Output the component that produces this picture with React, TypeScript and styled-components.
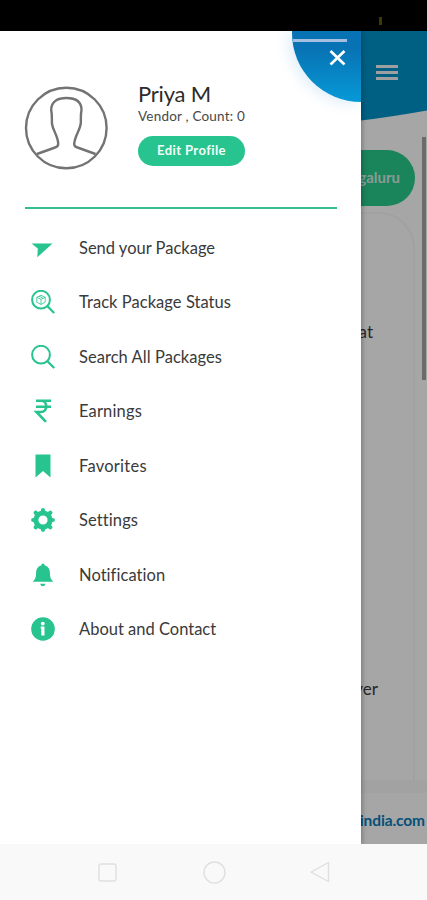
import React from "react";
import styled, { createGlobalStyle } from "styled-components";

const GREEN = "#27c48f";

const GlobalStyle = createGlobalStyle`
  *, *::before, *::after { box-sizing: border-box; }
  body { margin: 0; background: #fff; font-family: Lato, "Open Sans", sans-serif; }
  h1, p, ul { margin: 0; padding: 0; }
  button { font: inherit; border: 0; padding: 0; background: none; cursor: pointer; }
`;

const Phone = styled.div`
  display: flex;
  flex-direction: column;
  width: 427px;
  height: 900px;
  overflow: hidden;
`;

const StatusBar = styled.div`
  display: flex;
  flex: 0 0 31px;
  justify-content: flex-end;
  padding: 17px 45px 0 0;
  background: #000;
`;

const StatusMark = styled.span`
  width: 3px;
  height: 8px;
  background: #3f3905;
`;

const Stage = styled.main`
  position: relative;
  flex: 0 0 812.5px;
  overflow: hidden;
`;

const Page = styled.div`
  display: flex;
  flex-direction: column;
  height: 100%;
  background: #fff;
`;

const PageHeader = styled.header`
  position: relative;
  display: flex;
  flex: 0 0 90px;
  align-items: flex-start;
  justify-content: flex-end;
  padding: 34px 29px 0 0;
`;

const HeaderShape = styled.svg`
  position: absolute;
  inset: 0;
`;

const MenuButton = styled.button`
  position: relative;
  display: flex;
  flex-direction: column;
  gap: 3px;
  width: 22px;
`;

const MenuBar = styled.span`
  height: 3px;
  background: #f4f4f4;
`;

const PageBody = styled.section`
  display: flex;
  flex: 0 0 659px;
  flex-direction: column;
  padding: 29px 12px 0;
`;

const CityButton = styled.button`
  flex: 0 0 56px;
  padding: 0 15px 3px 0;
  border-radius: 28px;
  background: #28cb8b;
  color: #d5eee3;
  font-size: 15px;
  font-weight: 700;
  text-align: right;
`;

const Card = styled.article`
  display: flex;
  flex: 1;
  flex-direction: column;
  align-items: flex-end;
  margin-top: 6px;
  padding: 107px 40px 0 0;
  border: 2px solid #f7f7f7;
  border-bottom: 0;
  border-radius: 36px 36px 0 0;
  color: #3c3c3c;
  font-size: 17px;
  line-height: 22px;
`;

const CardLine = styled.p<{ $gap?: number; $shift?: number }>`
  margin-top: ${(p) => p.$gap ?? 0}px;
  margin-right: ${(p) => p.$shift ?? 0}px;
`;

const PageFooter = styled.footer`
  flex: 1;
  border-top: 13px solid #f9f9f9;
  padding: 17px 2px 0 0;
  color: #0b7cb8;
  font-size: 15.5px;
  font-weight: 700;
  letter-spacing: -0.1px;
  line-height: 20px;
  text-align: right;
`;

const ScrollThumb = styled.div`
  position: absolute;
  top: 106px;
  right: 1px;
  width: 4px;
  height: 243px;
  background: #a5a5a5;
`;

const Scrim = styled.div`
  position: absolute;
  inset: 0;
  background: rgba(0, 0, 0, 0.35);
`;

const Drawer = styled.aside`
  position: absolute;
  inset: 0 auto 0 0;
  display: flex;
  flex-direction: column;
  width: 361px;
  padding: 51px 24px 0;
  background: #fff;
  box-shadow: 1px 0 5px rgba(0, 0, 0, 0.3);
`;

const CloseCorner = styled.button`
  position: absolute;
  top: 0;
  right: 0;
  width: 69px;
  height: 71px;
  border-radius: 0 0 0 69px;
  background: linear-gradient(#0873b4 25%, #0799d7);
  box-shadow: -4px 2px 14px rgba(0, 130, 205, 0.14);
`;

const Profile = styled.section`
  display: flex;
  gap: 30px;
  height: 125px;
`;

const Identity = styled.div`
  display: flex;
  flex-direction: column;
  align-items: flex-start;
`;

const Name = styled.h1`
  color: #2c2c2c;
  font-size: 22px;
  font-weight: 400;
  letter-spacing: -0.2px;
  line-height: 23px;
`;

const Role = styled.p`
  margin-top: 2px;
  color: #484848;
  font-size: 13.5px;
  line-height: 18px;
  letter-spacing: 0.2px;
`;

const EditButton = styled.button`
  width: 107px;
  height: 30px;
  margin-top: 11px;
  padding-bottom: 2px;
  border-radius: 15px;
  background: ${GREEN};
  color: #f3fffa;
  font-size: 13px;
  font-weight: 700;
  letter-spacing: 0.4px;
`;

const Rule = styled.div`
  flex: 0 0 2px;
  margin-left: 1px;
  background: #36bd8e;
`;

const MenuList = styled.ul`
  display: flex;
  flex-direction: column;
  padding-top: 11.5px;
  list-style: none;
`;

const MenuItem = styled.li`
  display: grid;
  grid-template-columns: 24px 1fr;
  column-gap: 24px;
  align-items: center;
  height: 54.5px;
  padding-left: 7px;
  color: #3a3a3a;
`;

const Label = styled.span<{ $tracking: number }>`
  font-size: 16.5px;
  font-variant-ligatures: none;
  letter-spacing: ${(p) => p.$tracking}px;
  white-space: nowrap;
`;

const NavBar = styled.nav`
  display: flex;
  flex: 1;
  align-items: center;
  justify-content: space-between;
  padding: 0 95px;
  background: #f9f9f9;
`;

const Outline = styled.svg`
  fill: none;
  stroke: #e0e0e0;
  stroke-width: 1.4;
  stroke-linejoin: round;
`;

const Lens = ({ children }: { children?: React.ReactNode }) => (
  <g fill="none" stroke={GREEN}>
    <circle cx="10" cy="9.7" r="8.9" strokeWidth="2" />
    <path d="M16.2 16 23.2 23" strokeWidth="2.3" />
    {children}
  </g>
);

const items: { label: string; tracking: number; icon: React.ReactNode }[] = [
  { label: "Send your Package", tracking: 0, icon: <path d="M.5 7.4H21.5L6.3 21.3 6.8 12.6Z" fill={GREEN} /> },
  {
    label: "Track Package Status",
    tracking: 0.05,
    icon: (
      <Lens>
        <path d="M5.8 7.3 10 5.3l4.2 2v5L10 14.4l-4.2-2.1zM5.8 7.3 10 9.4l4.2-2.1M10 9.4v5M8 6.2l4.2 2.1" strokeWidth="0.8" />
      </Lens>
    ),
  },
  { label: "Search All Packages", tracking: 0.05, icon: <Lens /> },
  {
    label: "Earnings",
    tracking: 0.15,
    icon: <path d="M5 1.7H20M5 7.8H20M5 1.7H10C17 1.7 17 13 10 13H5.5L15 22.8" fill="none" stroke={GREEN} strokeWidth="2.6" />,
  },
  { label: "Favorites", tracking: 0.25, icon: <path d="M4.5 .5H19.5V23.5L12 17 4.5 23.5Z" fill={GREEN} /> },
  {
    label: "Settings",
    tracking: 0.1,
    icon: (
      <g fill="none" stroke={GREEN}>
        <circle cx="12" cy="12" r="7.1" strokeWidth="5" />
        <path
          d="M12 2.2V4M12 20v1.8M2.2 12H4M20 12h1.8M4.7 4.7l1.6 1.6M17.7 17.7l1.6 1.6M4.7 19.3l1.6-1.6M17.7 6.3l1.6-1.6"
          strokeWidth="4.2"
          strokeLinecap="round"
        />
      </g>
    ),
  },
  {
    label: "Notification",
    tracking: 0.05,
    icon: (
      <path
        d="M12 .5c1.2 0 1.5.8 1.5 1.8 3.6 1 5.4 3.6 5.4 7.5 0 4.5 1 6.9 3.4 8.9H1.7c2.4-2 3.4-4.4 3.4-8.9 0-3.9 1.8-6.5 5.4-7.5 0-1 .3-1.8 1.5-1.8ZM9.2 20.8h5.2c-.3 1.5-1.2 2.5-2.6 2.5s-2.3-1-2.6-2.5Z"
        fill={GREEN}
      />
    ),
  },
  {
    label: "About and Contact",
    tracking: 0,
    icon: (
      <>
        <circle cx="12" cy="12" r="11.8" fill={GREEN} />
        <circle cx="11.8" cy="6.6" r="1.9" fill="#fff" />
        <path d="M9.7 9.6h3.8v8.9h-3.2v-7.1h-.6z" fill="#fff" />
      </>
    ),
  },
];

export default function App() {
  return (
    <Phone>
      <GlobalStyle />
      <StatusBar>
        <StatusMark />
      </StatusBar>
      <Stage>
        <Page>
          <PageHeader>
            <HeaderShape width="427" height="90" viewBox="0 0 427 90">
              <path d="M0 0H427V79.5Q390 86 361 89.5Q180 92 0 60Z" fill="#0094c9" />
            </HeaderShape>
            <MenuButton aria-label="Open menu">
              <MenuBar />
              <MenuBar />
              <MenuBar />
            </MenuButton>
          </PageHeader>
          <PageBody>
            <CityButton>Bengaluru</CityButton>
            <Card>
              <CardLine>at</CardLine>
              <CardLine $gap={335} $shift={-5}>ver</CardLine>
            </Card>
          </PageBody>
          <PageFooter>india.com</PageFooter>
        </Page>
        <ScrollThumb />
        <Scrim />
        <Drawer>
          <CloseCorner aria-label="Close menu">
            <svg width="69" height="71" viewBox="0 0 69 71" fill="none">
              <path d="M1 9.5H55" stroke="#a4bfe0" strokeWidth="3" />
              <path d="m38.5 20 14 13.5m0-13.5-14 13.5" stroke="#fff" strokeWidth="2.7" />
            </svg>
          </CloseCorner>
          <Profile>
            <svg width="84" height="90" viewBox="0 0 84 90" fill="none" stroke="#737373" strokeWidth="2.4">
              <circle cx="42.3" cy="46" r="40.3" />
              <path d="M13 72 31 65.5Q34.2 64.7 34.2 62C34.2 54 29 49 28 42C27.6 37 28.4 34 27.2 28C27.2 19 34 16 42.3 16S57.5 19 57.5 28C56.3 34 57.2 37 56.7 42C55.7 49 50.7 54 50.2 62Q50.2 64.7 53.5 65.5L71.5 72" />
            </svg>
            <Identity>
              <Name>Priya M</Name>
              <Role>Vendor , Count: 0</Role>
              <EditButton>Edit Profile</EditButton>
            </Identity>
          </Profile>
          <Rule />
          <MenuList>
            {items.map((item) => (
              <MenuItem key={item.label}>
                <svg width="24" height="24" viewBox="0 0 24 24">
                  {item.icon}
                </svg>
                <Label $tracking={item.tracking}>{item.label}</Label>
              </MenuItem>
            ))}
          </MenuList>
        </Drawer>
      </Stage>
      <NavBar>
        <Outline width="24" height="24" viewBox="0 0 24 24">
          <rect x="4" y="4" width="17" height="17" rx="2" />
        </Outline>
        <Outline width="24" height="24" viewBox="0 0 24 24">
          <circle cx="12.5" cy="12.5" r="10.5" />
        </Outline>
        <Outline width="24" height="24" viewBox="0 0 24 24">
          <path d="M20.5 2.5v19L3 12.2Z" />
        </Outline>
      </NavBar>
    </Phone>
  );
}
